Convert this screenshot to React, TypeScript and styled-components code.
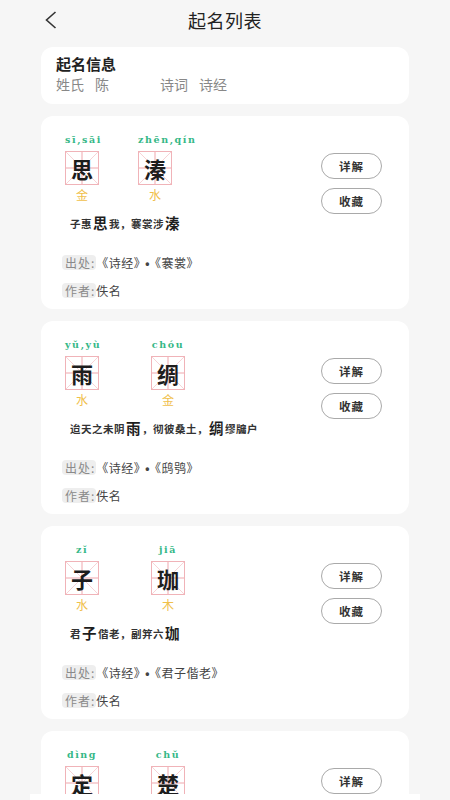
import React from "react";
import styled, { createGlobalStyle } from "styled-components";

const Global = createGlobalStyle`
  html, body { margin: 0; padding: 0; background: #f6f6f6; }
  body { font-family: "Noto Sans CJK SC", "Noto Sans", sans-serif; color: #222; }
  * { box-sizing: border-box; }
`;

const Page = styled.div`
  width: 450px;
  min-height: 800px;
  background: #f6f6f6;
  padding: 0 41px 20px;
  display: flex;
  flex-direction: column;
  gap: 12px;
`;

const Header = styled.div`
  height: 40px;
  margin: 0 -41px -5px;
  display: grid;
  grid-template-columns: 1fr auto 1fr;
  align-items: center;
`;

const BackBtn = styled.div`
  padding-left: 44px;
  display: flex;
  align-items: center;
  height: 40px;
`;

const Title = styled.div`
  font-size: 18px;
  color: #222;
  letter-spacing: 0.5px;
`;

const InfoCard = styled.div`
  background: #fff;
  border-radius: 12px;
  height: 57px;
  padding: 6px 15px 0;
  display: flex;
  flex-direction: column;
`;

const InfoTitle = styled.div`
  font-size: 15px;
  font-weight: 700;
  line-height: 21px;
  color: #222;
`;

const InfoRow = styled.div`
  display: flex;
  font-size: 14px;
  line-height: 20px;
  color: #888;
`;

const InfoItem = styled.span<{ $w?: number }>`
  display: inline-block;
  width: ${(p) => (p.$w ? `${p.$w}px` : "auto")};
  & > b { font-weight: 400; margin-left: 11px; }
`;

const Card = styled.div`
  background: #fff;
  border-radius: 12px;
  height: 193px;
  padding: 17px 27px 0 20px;
  display: flex;
  flex-direction: column;
`;

const Top = styled.div`
  height: 70px;
  display: flex;
  justify-content: space-between;
  align-items: flex-start;
`;

const Chars = styled.div<{ $gap: number }>`
  display: flex;
  gap: ${(p) => p.$gap}px;
  padding-left: 4px;
`;

const CharCol = styled.div`
  width: 34px;
  display: flex;
  flex-direction: column;
  align-items: stretch;
`;

const Pinyin = styled.div`
  font-family: "DejaVu Serif", "Liberation Serif", serif;
  font-weight: 700;
  font-size: 9.5px;
  letter-spacing: 1.6px;
  line-height: 14px;
  color: #35b887;
  text-align: center;
  white-space: nowrap;
`;

const line = "#f7d3d6";
const band = (deg: string) =>
  `linear-gradient(${deg}, transparent calc(50% - 0.6px), ${line} calc(50% - 0.6px), ${line} calc(50% + 0.6px), transparent calc(50% + 0.6px))`;

const GridBox = styled.div`
  margin-top: 4px;
  width: 34px;
  height: 34px;
  border: 1px solid #f0b3b8;
  display: flex;
  align-items: center;
  justify-content: center;
  font-size: 22px;
  font-weight: 700;
  color: #1d1d1d;
  background-color: #fff;
  background-image: ${band("45deg")}, ${band("135deg")}, ${band("90deg")}, ${band("0deg")};
  line-height: 1;
`;

const Wuxing = styled.div`
  margin-top: 2px;
  font-size: 12px;
  line-height: 16px;
  color: #f0c04b;
  text-align: center;
`;

const Buttons = styled.div`
  margin-top: 20px;
  display: flex;
  flex-direction: column;
  gap: 9px;
`;

const PillButton = styled.button`
  width: 61px;
  height: 26px;
  border: 1px solid #a9a9a9;
  border-radius: 13px;
  background: #fff;
  font-family: "Noto Sans CJK SC", sans-serif;
  font-size: 11.5px;
  font-weight: 700;
  color: #333;
  padding: 0;
  letter-spacing: 1px;
`;

const Sentence = styled.div`
  margin-top: 9px;
  padding-left: 9px;
  height: 20px;
  display: flex;
  align-items: flex-end;
  font-size: 10.5px;
  font-weight: 700;
  color: #333;
  line-height: 16px;
  letter-spacing: 0.5px;
`;

const Hi = styled.span`
  font-size: 14.5px;
  color: #1d1d1d;
  line-height: 18px;
  margin: 0 1px;
`;

const MetaRow = styled.div<{ $mt: number }>`
  margin-top: ${(p) => p.$mt}px;
  display: flex;
  align-items: center;
  height: 18px;
  font-size: 12px;
  color: #444;
  padding-left: 1px;
`;

const MetaLabel = styled.span`
  background: #eeeeee;
  color: #8a8a8a;
  border-radius: 4px;
  padding: 0 1px 0 3px;
  line-height: 15px;
  letter-spacing: 1px;
`;

const MetaValue = styled.span`
  letter-spacing: 0.5px;
`;

const Dot = styled.span`
  font-family: "Liberation Sans", sans-serif;
  font-weight: 700;
  margin: 0 -1px;
`;

const BottomStrip = styled.div`
  position: fixed;
  left: 30px;
  right: 30px;
  bottom: 0;
  height: 6px;
  background: #fff;
`;

type Ch = { py: string; c: string; wx: string };
type Item = { chars: Ch[]; gap: number; sentence: string; book: string; poem: string };

const items: Item[] = [
  {
    chars: [
      { py: "sī,sāi", c: "思", wx: "金" },
      { py: "zhēn,qín", c: "溱", wx: "水" },
    ],
    gap: 39,
    sentence: "子惠[思]我，褰裳涉[溱]",
    book: "《诗经》",
    poem: "《褰裳》",
  },
  {
    chars: [
      { py: "yǔ,yù", c: "雨", wx: "水" },
      { py: "chóu", c: "绸", wx: "金" },
    ],
    gap: 52,
    sentence: "迨天之未阴[雨]，彻彼桑土，[绸]缪牖户",
    book: "《诗经》",
    poem: "《鸱鸮》",
  },
  {
    chars: [
      { py: "zǐ", c: "子", wx: "水" },
      { py: "jiā", c: "珈", wx: "木" },
    ],
    gap: 52,
    sentence: "君[子]偕老，副笄六[珈]",
    book: "《诗经》",
    poem: "《君子偕老》",
  },
  {
    chars: [
      { py: "dìng", c: "定", wx: "火" },
      { py: "chǔ", c: "楚", wx: "金" },
    ],
    gap: 52,
    sentence: "[定]之方中，作于[楚]宫",
    book: "《诗经》",
    poem: "《定之方中》",
  },
];

function renderSentence(s: string) {
  const parts = s.split(/(\[[^\]]+\])/).filter(Boolean);
  return parts.map((p, i) =>
    p.startsWith("[") ? <Hi key={i}>{p.slice(1, -1)}</Hi> : <span key={i}>{p}</span>
  );
}

const BackIcon = () => (
  <svg width="14" height="18" viewBox="0 0 14 18">
    <polyline points="11.5,1 2.5,9 11.5,17" fill="none" stroke="#333" strokeWidth="1.6" strokeLinejoin="miter" />
  </svg>
);

export default function App() {
  return (
    <>
      <Global />
      <Page>
        <Header>
          <BackBtn>
            <BackIcon />
          </BackBtn>
          <Title>起名列表</Title>
          <div />
        </Header>
        <InfoCard>
          <InfoTitle>起名信息</InfoTitle>
          <InfoRow>
            <InfoItem $w={104}>
              姓氏<b>陈</b>
            </InfoItem>
            <InfoItem>
              诗词<b>诗经</b>
            </InfoItem>
          </InfoRow>
        </InfoCard>
        {items.map((it, idx) => (
          <Card key={idx}>
            <Top>
              <Chars $gap={it.gap}>
                {it.chars.map((ch, j) => (
                  <CharCol key={j}>
                    <Pinyin>{ch.py}</Pinyin>
                    <GridBox>{ch.c}</GridBox>
                    <Wuxing>{ch.wx}</Wuxing>
                  </CharCol>
                ))}
              </Chars>
              <Buttons>
                <PillButton>详解</PillButton>
                <PillButton>收藏</PillButton>
              </Buttons>
            </Top>
            <Sentence>{renderSentence(it.sentence)}</Sentence>
            <MetaRow $mt={21}>
              <MetaLabel>出处:</MetaLabel>
              <MetaValue>
                {it.book}
                <Dot>•</Dot>
                {it.poem}
              </MetaValue>
            </MetaRow>
            <MetaRow $mt={10}>
              <MetaLabel>作者:</MetaLabel>
              <MetaValue>佚名</MetaValue>
            </MetaRow>
          </Card>
        ))}
      </Page>
      <BottomStrip />
    </>
  );
}
